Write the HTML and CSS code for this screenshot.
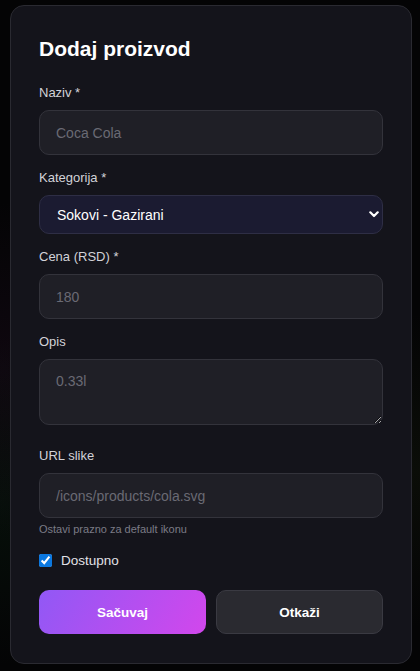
FILE: index.html
```html
<!DOCTYPE html>
<html lang="sr">
<head>
  <meta charset="UTF-8" />
  <meta name="viewport" content="width=device-width, initial-scale=1.0"/>
  <title>Dodaj proizvod</title>
  <link rel="stylesheet" href="styles.css">
</head>
<body>

  <div class="modal">
    <h2 class="modal-titulo">Dodaj proizvod</h2>

    <form class="forma">
      <div class="polje">
        <label for="naziv">Naziv *</label>
        <input id="naziv" type="text" placeholder="Coca Cola">
      </div>

      <div class="polje">
        <label for="kategorija">Kategorija *</label>
        <select id="kategorija">
          <option>Sokovi - Gazirani</option>
          <option>Sokovi - Negazirani</option>
          <option>Voda</option>
        </select>
      </div>

      <div class="polje">
        <label for="cena">Cena (RSD) *</label>
        <input id="cena" type="text" placeholder="180">
      </div>

      <div class="polje polje-opis">
        <label for="opis">Opis</label>
        <textarea id="opis" placeholder="0.33l"></textarea>
      </div>

      <div class="polje polje-url">
        <label for="slika">URL slike</label>
        <input id="slika" type="text" placeholder="/icons/products/cola.svg">
        <small class="napomena">Ostavi prazno za default ikonu</small>
      </div>

      <label class="dostupno">
        <input type="checkbox" checked>
        <span>Dostupno</span>
      </label>

      <div class="dugmad">
        <button type="submit" class="btn btn-sacuvaj">Sačuvaj</button>
        <button type="button" class="btn btn-otkazi">Otkaži</button>
      </div>
    </form>
  </div>

</body>
</html>
```

FILE: styles.css
```css
* {
  box-sizing: border-box;
  margin: 0;
  padding: 0;
}
body {
  font-family: 'Liberation Sans', Arial, Helvetica, sans-serif;
  background:
    radial-gradient(circle at 0% 55%, rgb(90 30 90 / 0.12), transparent 30%),
    radial-gradient(circle at 0% 75%, rgb(20 90 40 / 0.12), transparent 25%),
    radial-gradient(circle at 100% 70%, rgb(60 80 30 / 0.12), transparent 25%),
    #040405;
  color: #e8e8ee;
  min-height: 100vh;
}

.modal {
  width: 402px;
  margin: 5px 0 0 10px;
  background: #14141b;
  border: 1px solid #2a2a31;
  border-radius: 14px;
  padding: 30px 28px 29px 28px;
}

.modal-titulo {
  font-size: 21px;
  line-height: 25px;
  font-weight: 700;
  color: #fff;
  margin-bottom: 23px;
}

.polje {
  display: flex;
  flex-direction: column;
  margin-bottom: 14px;
}
.polje-opis {
  margin-bottom: 22px;
}

.polje label {
  font-size: 13px;
  line-height: 17px;
  color: #d2d2d8;
  margin-bottom: 9px;
}

.polje input,
.polje textarea,
.polje select {
  width: 100%;
  height: 45px;
  font-family: inherit;
  font-size: 14px;
  color: #fff;
  background: #1f1f26;
  border: 1px solid #33333b;
  border-radius: 10px;
  padding: 0 16px;
  outline: none;
}

.polje input::placeholder,
.polje textarea::placeholder {
  color: #6a6a74;
}

.polje select {
  height: 39px;
  appearance: none;
  background-color: #1b1b31;
  border-color: #2e2e45;
  padding-left: 17px;
  background-image: url("data:image/svg+xml,%3Csvg xmlns='http://www.w3.org/2000/svg' width='10' height='7' viewBox='0 0 10 7'%3E%3Cpath d='M1.3 1.3 5 5l3.7-3.7' fill='none' stroke='%23fff' stroke-width='2.2' stroke-linecap='round' stroke-linejoin='round'/%3E%3C/svg%3E");
  background-repeat: no-repeat;
  background-position: right 3px center;
}

.polje textarea {
  display: block;
  height: 66px;
  padding: 12px 16px;
  resize: vertical;
  line-height: 18px;
}

.napomena {
  display: block;
  font-size: 11px;
  line-height: 13px;
  color: #7b7b86;
  margin-top: 5px;
}
.polje-url {
  margin-bottom: 16px;
}

.dostupno {
  display: flex;
  align-items: center;
  gap: 9px;
  font-size: 13.5px;
  line-height: 17px;
  color: #e2e2e8;
  margin-bottom: 21px;
}
.dostupno input {
  width: 13px;
  height: 13px;
  margin: 0;
  accent-color: #0b78e0;
}

.dugmad {
  display: grid;
  grid-template-columns: 1fr 1fr;
  gap: 10px;
}

.btn {
  height: 44px;
  border-radius: 10px;
  font-family: inherit;
  font-size: 13.5px;
  font-weight: 700;
  color: #fff;
  cursor: pointer;
}
.btn-sacuvaj {
  border: none;
  background: linear-gradient(120deg, #9158f5, #d247ec);
}
.btn-otkazi {
  background: #2a2a30;
  border: 1px solid #3a3a42;
}
.btn:hover {
  filter: brightness(1.1);
}
```
